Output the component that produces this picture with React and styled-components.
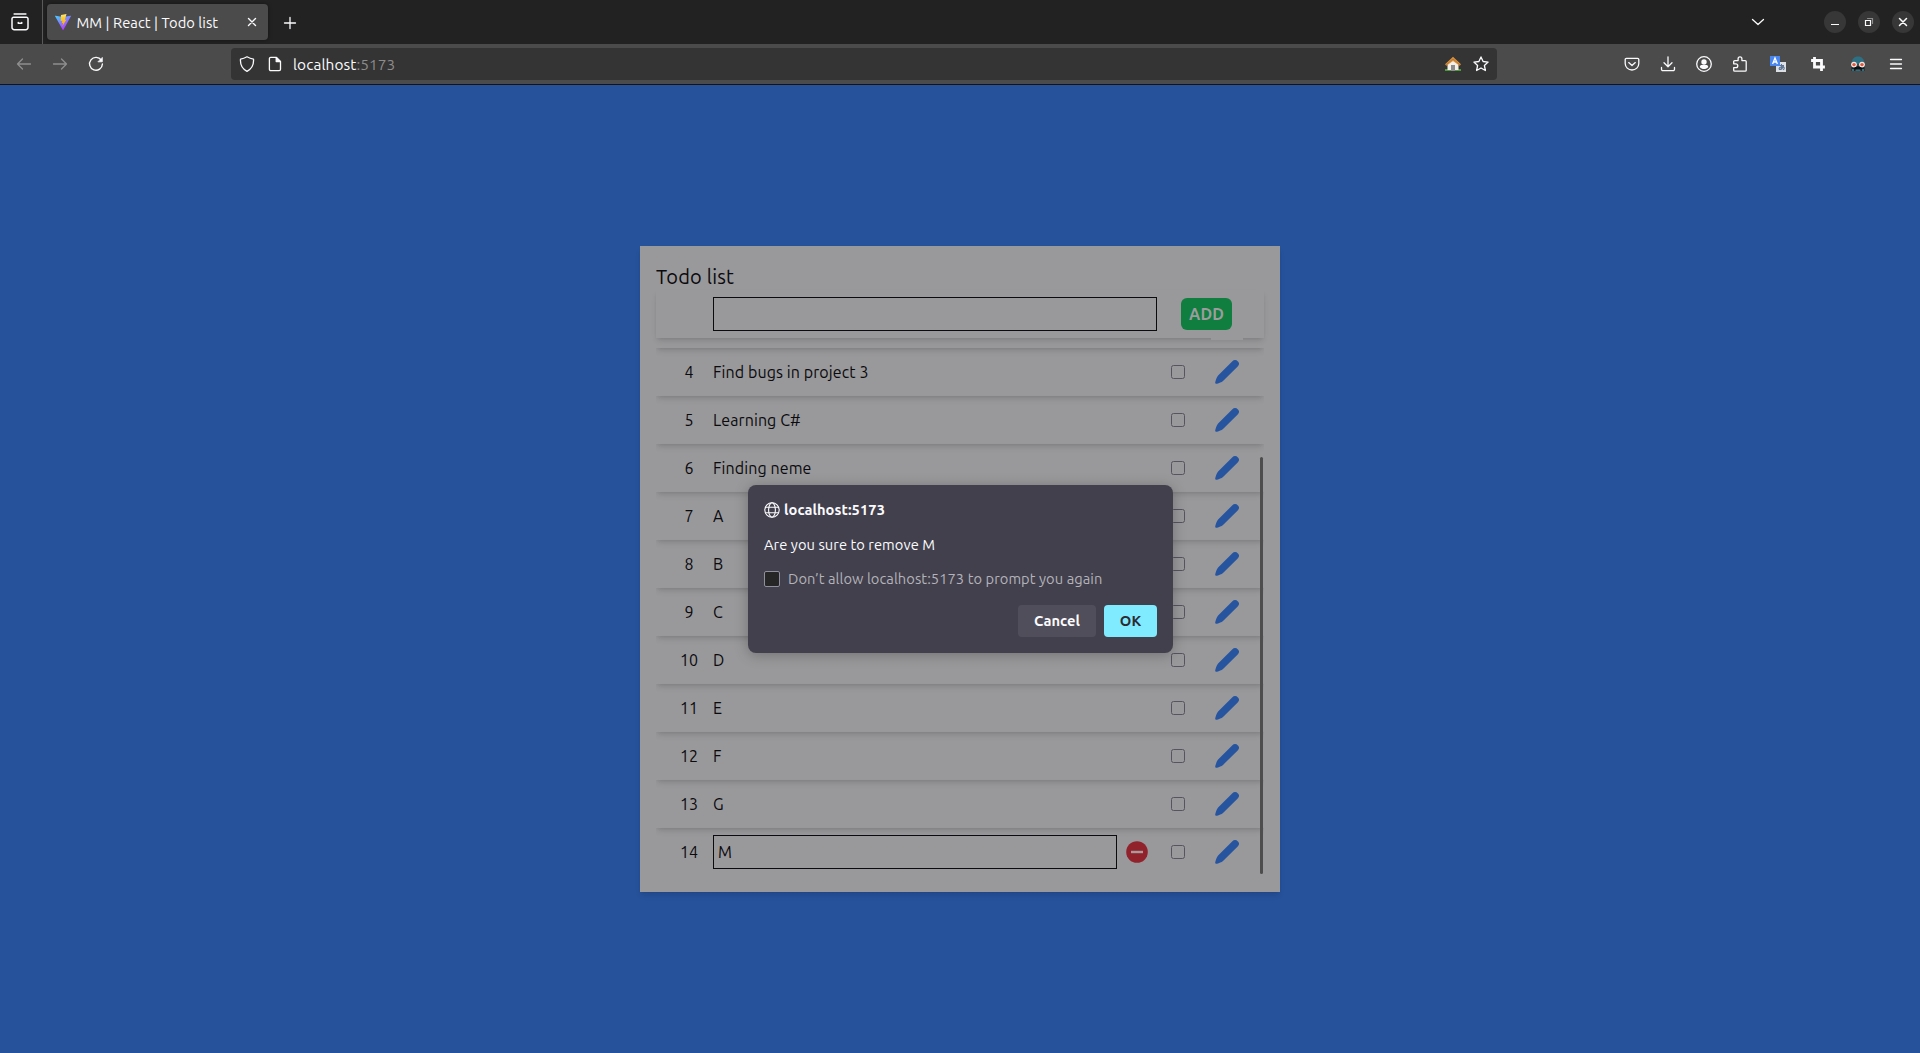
import React from "react";
import styled, { createGlobalStyle } from "styled-components";

const ink = "#0b0a0e";
const paper = "#99999b";
const blue = "#26529b";

const Global = createGlobalStyle`
  *, *::before, *::after { box-sizing: border-box; }
  html, body { margin: 0; padding: 0; }
  body { font-family: "Ubuntu", "Noto Sans", "Open Sans", sans-serif; overflow: hidden; }
  svg { display: block; flex: none; }
`;

const Window = styled.div`
  width: 1920px;
  height: 1053px;
  display: flex;
  flex-direction: column;
`;

const TabBar = styled.div`
  height: 44px;
  background: #222222;
  display: flex;
  align-items: center;
`;

const FirefoxView = styled.div`
  width: 43px;
  height: 44px;
  border-right: 1px solid #5a5a5a;
  display: flex;
  align-items: center;
  padding-left: 10px;
`;

const Tab = styled.div`
  width: 221px;
  height: 36px;
  margin-left: 4px;
  padding: 0 8px;
  border-radius: 4px;
  background: #4b4b4b;
  box-shadow: 0 0 4px rgba(0, 0, 0, 0.4);
  display: flex;
  align-items: center;
  color: #fbfbfe;
`;

const TabTitle = styled.span`
  flex: 1;
  margin-left: 5.5px;
  padding-top: 1px;
  font-size: 14.67px;
  letter-spacing: 0.07px;
  white-space: nowrap;
`;

const Icon = styled.svg.attrs((p) => ({
  width: p.$size || 16,
  height: p.$size || 16,
  viewBox: "0 0 16 16",
  fill: "none",
  stroke: "currentColor",
  strokeWidth: p.$weight || 1.3,
  strokeLinecap: "round",
  strokeLinejoin: "round",
}))`
  color: ${(p) => p.$color || "#fbfbfe"};
`;

const NewTab = styled.div`
  margin-left: 13.5px;
  padding-top: 1px;
`;

const WindowControls = styled.div`
  margin-left: auto;
  margin-right: 6px;
  display: flex;
  align-items: center;
  gap: 12px;
`;

const TabsMenu = styled.div`
  margin-right: 46px;
`;

const ControlButton = styled.div`
  width: 22px;
  height: 22px;
  border-radius: 50%;
  background: #373737;
  display: flex;
  align-items: center;
  justify-content: center;
`;

const Toolbar = styled.div`
  height: 41px;
  background: #4b4b4b;
  border-bottom: 1px solid #141414;
  display: flex;
  align-items: center;
`;

const Navigation = styled.div`
  width: 231px;
  padding-left: 16px;
  display: flex;
  gap: 20px;
`;

const AddressBar = styled.div`
  width: 1266px;
  height: 32px;
  border-radius: 4px;
  background: #343434;
  padding: 0 8px;
  display: flex;
  align-items: center;
`;

const Address = styled.div`
  flex: 1;
  margin-left: 10px;
  padding-top: 1px;
  font-size: 15.4px;
  letter-spacing: 0.09px;
  color: #fbfbfe;
`;

const Port = styled.span`
  color: #8c8c8c;
`;

const Gap = styled.div`
  width: 12px;
`;

const Actions = styled.div`
  margin-left: auto;
  margin-right: 16px;
  display: flex;
  align-items: center;
  gap: 20px;
`;

const Extension = styled.div`
  width: 20px;
  display: flex;
  justify-content: center;
`;

const Page = styled.main`
  flex: 1;
  padding-top: 161px;
  background: ${blue};
  display: flex;
  justify-content: center;
  align-items: flex-start;
  position: relative;
`;

const Card = styled.section`
  width: 640px;
  height: 646px;
  padding: 16px;
  background: ${paper};
  color: ${ink};
  box-shadow: 0 4px 6px -1px rgba(0, 0, 0, 0.1), 0 2px 4px -2px rgba(0, 0, 0, 0.1);
`;

const Title = styled.h1`
  margin: 0;
  height: 28px;
  font-size: 20px;
  font-weight: 400;
  line-height: 30px;
  letter-spacing: 0.18px;
`;

const rowShadow = "0 4px 6px -1px rgba(0,0,0,.11), 0 2px 4px -2px rgba(0,0,0,.11)";

const NewItem = styled.div`
  height: 48px;
  padding: 0 32px 0 57px;
  background: ${paper};
  box-shadow: ${rowShadow};
  display: flex;
  align-items: center;
  justify-content: space-between;
  position: relative;
  z-index: 1;

  &::after {
    content: "";
    position: absolute;
    right: 21px;
    top: 100%;
    width: 32px;
    height: 2px;
    background: ${paper};
  }
`;

const Field = styled.div`
  width: ${(p) => p.$w}px;
  height: 34px;
  border: 1px solid ${ink};
  padding-left: 4px;
  line-height: 32px;
`;

const AddButton = styled.div`
  width: 51px;
  height: 32px;
  border-radius: 6px;
  background: #107e3e;
  color: #9c9c9e;
  font-size: 16px;
  font-weight: 700;
  line-height: 32px;
  letter-spacing: 0.1px;
  text-align: center;
`;

const List = styled.div`
  height: 538px;
  overflow: hidden;
  display: flex;
  flex-direction: column;
  justify-content: flex-end;
  position: relative;
`;

const Row = styled.div`
  height: 48px;
  flex: none;
  box-shadow: ${rowShadow};
  display: flex;
  align-items: center;
  font-size: 16px;
  letter-spacing: 0.1px;
`;

const Index = styled.div`
  width: 32px;
  margin: 0 8px 0 17px;
  text-align: center;
  line-height: 48px;
`;

const Label = styled.div`
  flex: 1;
  line-height: 48px;
`;

const Editor = styled.div`
  flex: 1;
  display: flex;
  align-items: center;
  gap: 9px;
`;

const Check = styled.div`
  width: 14px;
  height: 14px;
  border: 1px solid #56545f;
  border-radius: 2.5px;
  margin-right: 30px;
`;

const PencilSlot = styled.div`
  width: 49px;
`;

const ScrollThumb = styled.div`
  position: absolute;
  right: 1px;
  bottom: 2px;
  width: 3px;
  height: 417px;
  border-radius: 2px;
  background: #4d4d4e;
`;

const Dialog = styled.div`
  position: absolute;
  left: 748px;
  top: 400px;
  z-index: 3;
  width: 425px;
  height: 168px;
  padding: 16px;
  border-radius: 8px;
  background: #42404d;
  box-shadow: 0 2px 14px rgba(0, 0, 0, 0.25);
  color: #fbfbfe;
  font-size: 14.67px;
  letter-spacing: 0.07px;
  display: flex;
  flex-direction: column;
`;

const Host = styled.div`
  height: 18px;
  display: flex;
  align-items: center;
  gap: 4px;
  font-weight: 700;
  line-height: 16px;
`;

const Message = styled.div`
  margin-top: 16px;
  height: 20px;
  line-height: 20px;
`;

const Option = styled.div`
  margin-top: 16px;
  height: 16px;
  display: flex;
  align-items: center;
  gap: 8px;
  color: #b4b3b9;
  white-space: nowrap;
`;

const OptionText = styled.span`
  padding-bottom: 2px;
`;

const OptionBox = styled.div`
  width: 16px;
  height: 16px;
  border: 1px solid #8f8f9d;
  border-radius: 2px;
  background: #262626;
`;

const Buttons = styled.div`
  margin-top: 18px;
  display: flex;
  justify-content: flex-end;
  gap: 8px;
`;

const Button = styled.div`
  width: ${(p) => p.$w}px;
  height: 32px;
  border-radius: 4px;
  background: ${(p) => (p.$primary ? "#80ebff" : "#504e5b")};
  color: ${(p) => (p.$primary ? "#2b2a33" : "#fbfbfe")};
  font-weight: 700;
  line-height: 32px;
  text-align: center;
`;

const Vite = () => (
  <svg width="16" height="16" viewBox="0 0 16 16">
    <defs>
      <linearGradient id="v" x1="0" y1="0" x2=".6" y2="1">
        <stop offset="0" stopColor="#41d1ff" />
        <stop offset="1" stopColor="#bd34fe" />
      </linearGradient>
      <linearGradient id="b" x1="0" y1="0" x2="0" y2="1">
        <stop offset="0" stopColor="#ffea83" />
        <stop offset=".3" stopColor="#ffcd2b" />
        <stop offset="1" stopColor="#ffa800" />
      </linearGradient>
    </defs>
    <path d="M15.9 2.3 8.4 15.7a.4.4 0 0 1-.7 0L.1 2.3a.4.4 0 0 1 .4-.6L8 3l7.5-1.3a.4.4 0 0 1 .4.6z" fill="url(#v)" />
    <path d="M11.5 0 6 1.1l-.4 5.9 1.7-.3-.5 2.5 1.3-.3-.7 3.3 4-6.6-1.6.3z" fill="url(#b)" />
  </svg>
);

const House = () => (
  <svg width="16" height="16" viewBox="0 0 16 16">
    <path d="M0 13h16v2H0z" fill="#4c9a3c" />
    <path d="M2.5 7.5 8 3l5.5 4.5V14h-11z" fill="#f4efe9" />
    <path d="M6 9h4v6H6z" fill="#8b8b8b" />
    <path d="M0 8.2 8 .8l8 7.4-1.5 1.5L8 5 1.5 9.7z" fill="#d8923f" />
    <path d="M.8 9 8 3l7.2 6" fill="none" stroke="#a8632a" strokeWidth=".6" />
  </svg>
);

const Translate = () => (
  <svg width="16" height="16" viewBox="0 0 16 16">
    <path d="M6 6h10v10H6z" fill="#dcdfe4" />
    <path d="M9 9.5h5M11.500 8c-.3 2-.5 4 .5 5.500M13.500 9.500c-.5 2-2 4-4 4-1.500-1.500 2-3.500 4-2.500 1.500 1 .5 2.500-.5 2.800" stroke="#5d7494" strokeWidth="1.1" fill="none" />
    <path d="M0 0h10v10H0z" fill="#4a86f0" />
    <path d="M2.6 8 5 2l2.4 6M3.5 6h3" stroke="#fff" strokeWidth="1.3" fill="none" />
  </svg>
);

const Face = () => (
  <svg width="16" height="16" viewBox="0 0 16 16">
    <path d="M1.5 8C1.5 3 4.200 .5 8 .5s6.500 2.500 6.500 7.500z" fill="#2d7083" />
    <path d="M1.5 10h13v5h-13z" fill="#1b2328" />
    <path d="M2 13h2v2H2zM5.500 13.500h5V15h-5zM12 13h2v2h-2z" fill="#2d7083" />
    <circle cx="4" cy="8.6" r="2.9" fill="#f3e5df" />
    <circle cx="12" cy="8.6" r="2.9" fill="#f3e5df" />
    <circle cx="4" cy="8.6" r="1.7" fill="#e0563f" />
    <circle cx="12" cy="8.6" r="1.7" fill="#e0563f" />
    <path d="M3.500 13c1-2.300 3.200-2.500 4.500-1.500 1.300-1 3.500-.8 4.500 1.500-2 .5-3.500.3-4.500-.5-1 .8-2.500 1-4.500.5z" fill="#0c0c0c" />
  </svg>
);

const Pencil = () => (
  <svg width="24" height="24" viewBox="0 0 24 24">
    <path
      d="M17.400 1.200a3.600 3.600 0 0 1 5.300 0 3.600 3.600 0 0 1 0 5.200L8 20.900C6.600 22.300 4 22.900 2.100 23.700.8 24.200-.1 23.200.3 22 1 20 1.600 17.200 3.100 15.600z"
      fill="#26549f"
    />
  </svg>
);

const Remove = () => (
  <svg width="22" height="22" viewBox="0 0 22 22">
    <circle cx="11" cy="11" r="10.8" fill="#91222c" />
    <rect x="5" y="9.8" width="12" height="2.4" fill="#a89a9d" />
  </svg>
);

const items = [
  { n: 4, text: "Find bugs in project 3" },
  { n: 5, text: "Learning C#" },
  { n: 6, text: "Finding neme" },
  { n: 7, text: "A" },
  { n: 8, text: "B" },
  { n: 9, text: "C" },
  { n: 10, text: "D" },
  { n: 11, text: "E" },
  { n: 12, text: "F" },
  { n: 13, text: "G" },
  { n: 14, text: "M", editing: true },
];

const TodoRow = ({ n, text, editing }) => (
  <Row>
    <Index>{n}</Index>
    {editing ? (
      <Editor>
        <Field $w={404}>{text}</Field>
        <Remove />
      </Editor>
    ) : (
      <Label>{text}</Label>
    )}
    <Check />
    <PencilSlot>
      <Pencil />
    </PencilSlot>
  </Row>
);

export default function App() {
  return (
    <Window>
      <Global />
      <TabBar>
        <FirefoxView>
          <Icon $size={20} $weight={1.2}>
            <path d="M3.300 1.600h9.400M2.800 4.200h10.400a1.200 1.200 0 0 1 1.200 1.200v7a1.800 1.800 0 0 1-1.800 1.800H3.400a1.800 1.800 0 0 1-1.800-1.800v-7a1.200 1.200 0 0 1 1.200-1.200zM6.600 8.300v.6h2.800v-.6" />
          </Icon>
        </FirefoxView>
        <Tab>
          <Vite />
          <TabTitle>MM | React | Todo list</TabTitle>
          <Icon $weight={1.4}>
            <path d="m4.500 4.500 7 7m0-7-7 7" />
          </Icon>
        </Tab>
        <NewTab>
          <Icon>
            <path d="M8 2.500v11M2.500 8h11" />
          </Icon>
        </NewTab>
        <WindowControls>
          <TabsMenu>
            <Icon>
              <path d="m2.500 5.500 5.500 5 5.500-5" />
            </Icon>
          </TabsMenu>
          <ControlButton>
            <Icon>
              <path d="M4.500 10.500h7" strokeLinecap="square" strokeWidth="1" />
            </Icon>
          </ControlButton>
          <ControlButton>
            <Icon $weight={1.2}>
              <path d="M4.500 6.500h5v5h-5z" strokeLinejoin="miter" />
              <path d="M6.500 4.500h5v5" stroke="#8c8c8c" strokeLinejoin="miter" />
            </Icon>
          </ControlButton>
          <ControlButton>
            <Icon $weight={1.5}>
              <path d="m4.500 4.500 7 7m0-7-7 7" />
            </Icon>
          </ControlButton>
        </WindowControls>
      </TabBar>

      <Toolbar>
        <Navigation>
          <Icon $color="#8e8e8e">
            <path d="M14.500 8h-13M6.500 3 1.500 8l5 5" />
          </Icon>
          <Icon $color="#8e8e8e">
            <path d="M1.500 8h13M9.500 3l5 5-5 5" />
          </Icon>
          <Icon $weight={1.4}>
            <path d="M13.300 4.200A6.400 6.400 0 1 0 14.400 8" />
            <path d="M14.300 1.800v4h-4z" fill="currentColor" strokeWidth=".8" />
          </Icon>
        </Navigation>
        <AddressBar>
          <Icon>
            <path d="M8 .8c2 1.200 4 2 6.500 2.300.4 5-1 9.400-6.500 12.200C2.500 12.500 1.100 8.100 1.500 3.100 4 2.800 6 2 8 .8z" />
          </Icon>
          <Gap />
          <Icon>
            <path d="M3.700 1.400h5.800l4 4v7.900a1.300 1.300 0 0 1-1.300 1.300H3.700a1.300 1.300 0 0 1-1.300-1.300V2.700a1.300 1.300 0 0 1 1.300-1.300z" />
            <path d="M9.200 1.600v4h4z" fill="currentColor" />
          </Icon>
          <Address>
            localhost<Port>:5173</Port>
          </Address>
          <House />
          <Gap />
          <Icon>
            <path d="m8 .9 2.100 4.600 5 .6-3.700 3.400 1 5L8 12l-4.400 2.500 1-5L.9 6.100l5-.6z" />
          </Icon>
        </AddressBar>
        <Actions>
          <Icon>
            <path d="M2.400 2.300h11.200a1.200 1.200 0 0 1 1.200 1.200V7.500a6.800 6.500 0 0 1-13.600 0v-4a1.200 1.200 0 0 1 1.200-1.200zM4.700 6.600 8 9.600l3.300-3" />
          </Icon>
          <Icon>
            <path d="M8 .8v9.700M4 6.800l4 4 4-4M1.500 11.500v1.800a1.300 1.300 0 0 0 1.300 1.300h10.400a1.300 1.300 0 0 0 1.300-1.300v-1.800" />
          </Icon>
          <Icon>
            <circle cx="8" cy="8" r="7.3" />
            <circle cx="8" cy="6" r="2.7" fill="currentColor" stroke="none" />
            <path d="M3.800 11c0-1.400 1-1.900 2.200-1.900h4c1.200 0 2.200.5 2.200 1.900-1 1.400-2.500 2-4.200 2s-3.200-.6-4.200-2z" fill="currentColor" stroke="none" />
          </Icon>
          <Icon>
            <path d="M1.700 7.800V5.600a1 1 0 0 1 1-1h3.400V2.800a1.900 1.900 0 0 1 3.800 0v1.800h3.300a1 1 0 0 1 1 1v8.600a1 1 0 0 1-1 1H2.700a1 1 0 0 1-1-1v-2.600h2.200a1.900 1.900 0 0 0 0-3.800z" />
          </Icon>
          <Extension>
            <Translate />
          </Extension>
          <Extension>
            <Icon $weight={2.8}>
              <path d="M4.500 2.500v8.500H13.500M2.500 4.500h9v9" strokeLinecap="square" strokeLinejoin="miter" />
            </Icon>
          </Extension>
          <Extension>
            <Face />
          </Extension>
          <Icon>
            <path d="M2.500 3.500h11M2.500 8h11M2.500 12.500h11" />
          </Icon>
        </Actions>
      </Toolbar>

      <Page>
        <Card>
          <Title>Todo list</Title>
          <NewItem>
            <Field $w={444} />
            <AddButton>ADD</AddButton>
          </NewItem>
          <List>
            <Row />
            {items.map((item) => (
              <TodoRow key={item.n} {...item} />
            ))}
            <ScrollThumb />
          </List>
        </Card>

        <Dialog>
          <Host>
            <Icon $weight={1.1}>
              <circle cx="8" cy="8" r="7.2" />
              <ellipse cx="8" cy="8" rx="3.4" ry="7.2" />
              <path d="M1.500 5.300h13M1.500 10.700h13" />
            </Icon>
            localhost:5173
          </Host>
          <Message>Are you sure to remove M</Message>
          <Option>
            <OptionBox />
            <OptionText>Don’t allow localhost:5173 to prompt you again</OptionText>
          </Option>
          <Buttons>
            <Button $w={78}>Cancel</Button>
            <Button $w={53} $primary>
              OK
            </Button>
          </Buttons>
        </Dialog>
      </Page>
    </Window>
  );
}
